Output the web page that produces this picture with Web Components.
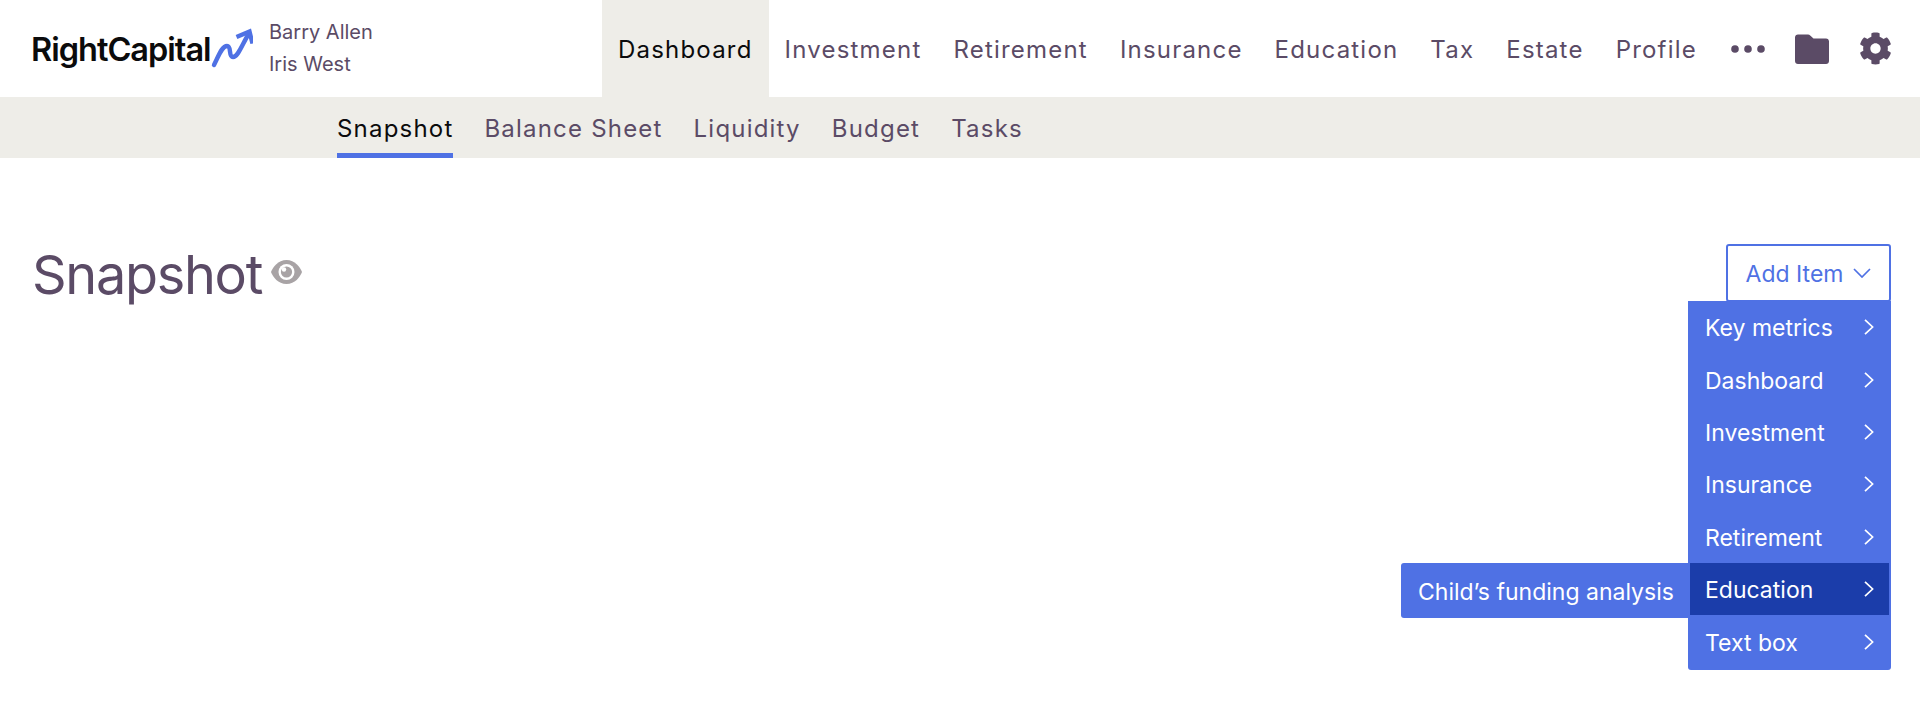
<!DOCTYPE html>
<html><head><meta charset="utf-8"><style>
html,body{margin:0;background:#fff}
body{font-family:Inter,"Liberation Sans",sans-serif;color:#5b4b66;height:711px;overflow:hidden}
</style></head><body>
<rc-header></rc-header>
<rc-subnav></rc-subnav>
<rc-page></rc-page>
<script>
function def(name,html){customElements.define(name,class extends HTMLElement{constructor(){super();this.attachShadow({mode:'open'}).innerHTML=html;}});}
def('rc-logo',`<style>:host{display:flex;align-items:center;width:269px;flex:none;box-sizing:border-box;padding-left:31px}
b{font:600 32.5px/1 Inter,"Liberation Sans",sans-serif;color:#0b0b0c;letter-spacing:-1px;margin-top:3px}
svg{flex:none;margin-top:-2px}</style>
<b>RightCapital</b><svg width="42" height="40" viewBox="0 0 42 40"><path d="M3 37 C8 27 11 18 16 18 C21 18 17 29 22 29 C27 29 31 17 37 7" fill="none" stroke="#4f71e4" stroke-width="4.400" stroke-linecap="round"/><path d="M25.500 9 38.500 3.500 41.500 15.500" fill="none" stroke="#4f71e4" stroke-width="4.400"/></svg>`);
def('rc-names',`<style>:host{display:block;flex:none;width:333px;font:400 20px/33px Inter,"Liberation Sans",sans-serif;color:#5b4b66;padding-top:16px;box-sizing:border-box}</style><div>Barry Allen</div><div style="margin-top:-1px">Iris West</div>`);
def('rc-tab',`<style>:host{display:flex;align-items:center;height:97px;box-sizing:border-box;padding:2px 16px 0;font:400 24px/1 Inter,"Liberation Sans",sans-serif;letter-spacing:1.2px;color:#5b4b66;flex:none}
:host([active]){background:#eeede8;color:#0b0b0c}</style><slot></slot>`);
def('rc-header',`<style>:host{display:flex;height:97px;background:#fff}
.ic{display:flex;align-items:center;margin-left:18px}
</style><rc-logo></rc-logo><rc-names></rc-names>
<rc-tab active>Dashboard</rc-tab><rc-tab>Investment</rc-tab><rc-tab>Retirement</rc-tab><rc-tab>Insurance</rc-tab><rc-tab>Education</rc-tab><rc-tab>Tax</rc-tab><rc-tab>Estate</rc-tab><rc-tab>Profile</rc-tab>
<div class="ic"><svg width="34" height="8" viewBox="0 0 34 8" fill="#5b4b66"><circle cx="4" cy="4" r="3.800"/><circle cx="17" cy="4" r="3.800"/><circle cx="30" cy="4" r="3.800"/></svg></div>
<div class="ic" style="margin-left:30px"><svg width="34" height="30" viewBox="0 0 34 30" fill="#5b4b66"><path d="M3 .5h10c1 0 1.600.4 2.200 1L18.500 4.500H31c1.700 0 3 1.300 3 3V27c0 1.700-1.300 3-3 3H3c-1.700 0-3-1.300-3-3V3.500C0 1.800 1.300.5 3 .5z"/></svg></div>
<div class="ic" style="margin-left:30px"><svg width="33" height="33" viewBox="0 0 512 512" fill="#5b4b66"><path d="M487.4 315.7l-42.6-24.6c4.3-23.2 4.3-47 0-70.2l42.6-24.6c4.9-2.8 7.1-8.6 5.500-14-11.100-35.600-30-67.800-54.700-94.600-3.800-4.100-10-5.100-14.800-2.300L380.800 110c-17.900-15.400-38.500-27.300-60.800-35.100V25.800c0-5.600-3.900-10.500-9.400-11.700-36.700-8.200-74.300-7.800-109.200 0-5.500 1.200-9.400 6.100-9.400 11.700V75c-22.200 7.900-42.800 19.800-60.800 35.100L88.700 85.500c-4.900-2.800-11-1.900-14.800 2.300-24.700 26.700-43.600 58.900-54.700 94.600-1.700 5.400.6 11.200 5.500 14L67.300 221c-4.300 23.200-4.300 47 0 70.200l-42.6 24.600c-4.900 2.800-7.100 8.600-5.500 14 11.100 35.600 30 67.800 54.700 94.600 3.800 4.100 10 5.100 14.800 2.300l42.600-24.600c17.900 15.400 38.500 27.300 60.800 35.100v49.200c0 5.600 3.900 10.500 9.400 11.700 36.700 8.200 74.300 7.800 109.200 0 5.500-1.200 9.400-6.100 9.400-11.700v-49.200c22.200-7.900 42.800-19.800 60.800-35.100l42.600 24.600c4.900 2.800 11 1.900 14.800-2.300 24.700-26.700 43.600-58.900 54.700-94.600 1.500-5.500-.7-11.300-5.600-14.100zM256 336c-44.100 0-80-35.900-80-80s35.900-80 80-80 80 35.900 80 80-35.900 80-80 80z"/></svg></div>`);
def('rc-subtab',`<style>:host{display:flex;align-items:center;height:61px;box-sizing:border-box;border-bottom:5px solid transparent;padding-top:7px;font:400 24px/1 Inter,"Liberation Sans",sans-serif;letter-spacing:1.2px;color:#5b4b66}
:host([active]){color:#0b0b0c;border-bottom-color:#4f71e4}</style><slot></slot>`);
def('rc-subnav',`<style>:host{display:flex;gap:31px;height:61px;background:#eeede8;padding-left:337px}</style><rc-subtab active>Snapshot</rc-subtab><rc-subtab>Balance Sheet</rc-subtab><rc-subtab>Liquidity</rc-subtab><rc-subtab>Budget</rc-subtab><rc-subtab>Tasks</rc-subtab>`);
def('rc-item',`<style>:host{display:flex;align-items:center;justify-content:space-between;height:52.400px;padding:3px 15px 0 15px;font:400 23px/1 Inter,"Liberation Sans",sans-serif;color:#fff;box-sizing:border-box}
:host([active]){background:#1b3daa}
svg{flex:none;margin-top:-3px}</style><slot></slot><svg width="10" height="16" viewBox="0 0 10 16" fill="none" stroke="#fff" stroke-width="1.700"><path d="M1 .8 8.600 8 1 15.200"/></svg>`);
def('rc-menu',`<style>:host{display:block;position:absolute;right:0;top:57px;width:203px;background:#4f71e4;border-radius:0 0 3px 3px;padding:0 2px 2px;box-sizing:border-box}
.s{position:absolute;right:100%;top:262px;height:55px;width:287px;box-sizing:border-box;background:#4f71e4;color:#fff;border-radius:3px 0 0 3px;display:flex;align-items:center;padding:3px 0 0 17px;font:400 23px/1 Inter,"Liberation Sans",sans-serif;white-space:nowrap}
</style><rc-item>Key metrics</rc-item><rc-item>Dashboard</rc-item><rc-item>Investment</rc-item><rc-item>Insurance</rc-item><rc-item>Retirement</rc-item><rc-item active>Education</rc-item><rc-item>Text box</rc-item>
<div class="s">Child’s funding analysis</div>`);
def('rc-add',`<style>:host{display:block;position:relative;width:165px;flex:none}
.b{display:flex;align-items:center;justify-content:center;gap:10px;height:58px;box-sizing:border-box;border:2px solid #4f71e4;border-radius:3px;padding-top:2px;color:#4f71e4;font:400 23px/1 Inter,"Liberation Sans",sans-serif;background:#fff}
svg{margin-top:-2px}
</style><div class="b">Add Item<svg width="18" height="10" viewBox="0 0 18 10" fill="none" stroke="#4f71e4" stroke-width="1.700"><path d="M1 1l8 8 8-8"/></svg></div><rc-menu></rc-menu>`);
def('rc-page',`<style>:host{display:flex;justify-content:space-between;padding:86px 29px 0 32px;align-items:flex-start}
.t{display:flex;align-items:center;gap:9px;font:400 54px/62px Inter,"Liberation Sans",sans-serif;letter-spacing:-1.300px;color:#5b4b66;height:62px}
svg{margin-top:-6px}
</style><div class="t">Snapshot<svg width="31" height="24" viewBox="0 0 31 24"><path d="M15.500 0C24 0 29 7 31 12 29 17 24 24 15.500 24 7 24 2 17 0 12 2 7 7 0 15.500 0z" fill="#a8a3a5"/><circle cx="15.500" cy="12" r="8" fill="#fff"/><circle cx="15.500" cy="12" r="5.600" fill="#a8a3a5"/><circle cx="13" cy="9.500" r="2.200" fill="#fff"/></svg></div><rc-add></rc-add>`);
</script>
</body></html>
